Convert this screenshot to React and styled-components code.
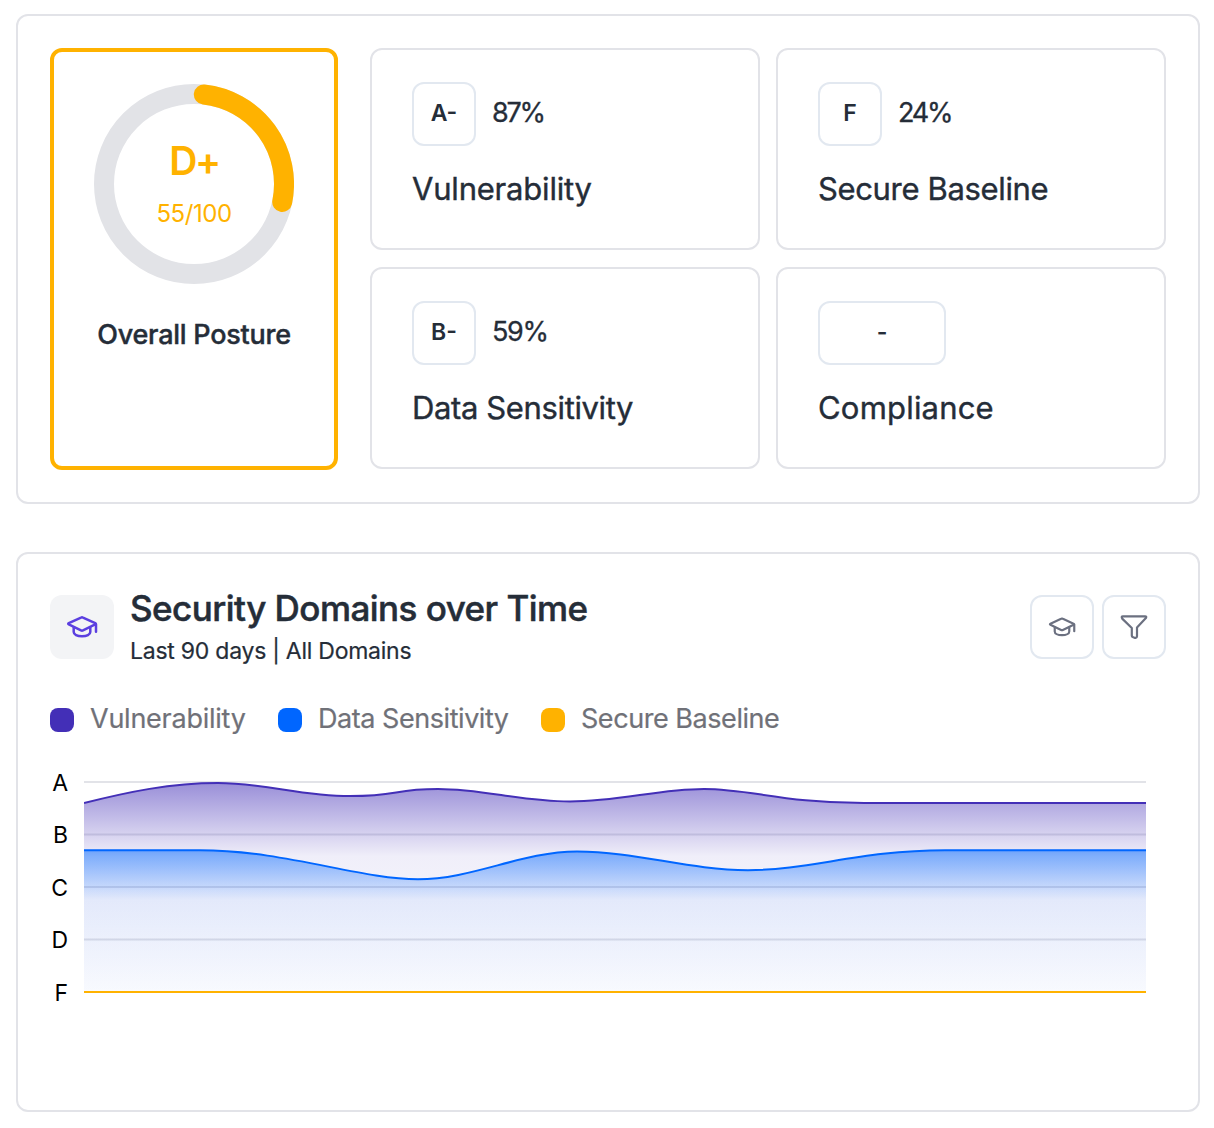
import styled, { createGlobalStyle } from "styled-components";

const GlobalStyle = createGlobalStyle`
  * {
    box-sizing: border-box;
  }

  body {
    margin: 0;
    background: #fff;
    color: #252d38;
    font-family: Inter, "Liberation Sans", sans-serif;
  }
`;

const Page = styled.main`
  display: flex;
  flex-direction: column;
  gap: 48px;
  padding: 14px 14px 16px 16px;
`;

const Panel = styled.section`
  height: ${(props) => props.$height}px;
  padding: 32px;
  border: 2px solid #e2e3e8;
  border-radius: 12px;
`;

const Summary = styled(Panel)`
  display: flex;
  gap: 32px;
`;

const Overall = styled.div`
  display: flex;
  flex-direction: column;
  align-items: center;
  flex: 0 0 288px;
  height: 422px;
  padding-top: 32px;
  border: 4px solid #ffb200;
  border-radius: 12px;
`;

const Ring = styled.div`
  display: grid;
  width: 200px;
  height: 200px;

  & > * {
    grid-area: 1 / 1;
  }
`;

const RingText = styled.div`
  display: flex;
  flex-direction: column;
  align-items: center;
  padding-top: 52px;
  color: #ffb200;
`;

const OverallGrade = styled.span`
  font-size: 39px;
  line-height: 50px;
  font-weight: 600;
  letter-spacing: -2.4px;
`;

const OverallScore = styled.span`
  margin-top: 13px;
  font-size: 24px;
  line-height: 30px;
  letter-spacing: -0.45px;
`;

const OverallLabel = styled.h3`
  margin: 31px 0 0;
  font-size: 27px;
  line-height: 40px;
  font-weight: 500;
  letter-spacing: -0.25px;
  -webkit-text-stroke: 0.4px;
`;

const Cards = styled.div`
  display: grid;
  flex: 1;
  grid-template-columns: repeat(2, 1fr);
  grid-template-rows: repeat(2, 202px);
  gap: 17px 16px;
`;

const Card = styled.article`
  padding: 32px 40px;
  border: 2px solid #e2e3e8;
  border-radius: 12px;
`;

const CardTop = styled.div`
  display: flex;
  align-items: center;
  gap: 16px;
`;

const Grade = styled.div`
  display: flex;
  align-items: center;
  justify-content: center;
  width: ${(props) => (props.$wide ? 128 : 64)}px;
  height: 64px;
  padding-bottom: 2px;
  border: 2px solid #e2e8f0;
  border-radius: 12px;
  font-size: 23px;
  font-weight: 600;
`;

const Percent = styled.span`
  padding-bottom: 3px;
  font-size: 27px;
  letter-spacing: ${(props) => props.$spacing}px;
  -webkit-text-stroke: 0.3px;
`;

const CardTitle = styled.h3`
  margin: 23px 0 0;
  font-size: 31px;
  line-height: 40px;
  font-weight: 400;
  letter-spacing: ${(props) => props.$spacing}px;
  -webkit-text-stroke: 0.4px;
`;

const Header = styled.header`
  display: flex;
  height: 88px;
  padding-top: 9px;
`;

const IconTile = styled.div`
  display: grid;
  place-items: center;
  width: 64px;
  height: 64px;
  background: #f3f4f6;
  border-radius: 12px;
  color: #5b3fe0;
`;

const Heading = styled.div`
  flex: 1;
  margin: -9px 0 0 16px;
`;

const Title = styled.h2`
  margin: 0;
  font-size: 35px;
  line-height: 44px;
  font-weight: 500;
  letter-spacing: -0.53px;
  -webkit-text-stroke: 0.5px;
`;

const Subtitle = styled.p`
  margin: 5px 0 0;
  font-size: 23px;
  line-height: 32px;
  letter-spacing: -0.25px;
  -webkit-text-stroke: 0.2px;
`;

const Actions = styled.div`
  display: flex;
  gap: 8px;
`;

const IconButton = styled.button`
  display: grid;
  place-items: center;
  width: 64px;
  height: 64px;
  padding: 0;
  border: 2px solid #e2e8f0;
  border-radius: 12px;
  background: #fff;
  color: #6b7080;
`;

const Legend = styled.ul`
  display: flex;
  margin: 24px 0 0;
  padding: 0;
  list-style: none;
`;

const LegendItem = styled.li`
  display: flex;
  align-items: center;
  width: ${(props) => props.$width}px;
  height: 44px;
  color: #707178;
  font-size: 27px;
  line-height: 40px;
  letter-spacing: ${(props) => props.$spacing}px;
  white-space: nowrap;
  -webkit-text-stroke: 0.2px;

  &::before {
    content: "";
    width: 24px;
    height: 24px;
    margin: 0 16px 0 0;
    border-radius: 8px;
    background: ${(props) => props.$color};
  }
`;

const LegendText = styled.span`
  padding-bottom: 3px;
`;

const Chart = styled.div`
  display: flex;
  gap: 16px;
  margin-top: 15px;
`;

const Axis = styled.div`
  display: flex;
  flex-direction: column;
  width: 18px;
  margin-top: -0.3px;
  color: #000;
  font-size: 23px;
  text-align: right;
`;

const Tick = styled.span`
  height: 52.5px;
  line-height: 52.5px;
`;

const Plot = styled.svg`
  display: block;
  margin-top: 24px;
`;

const domains = [
  { name: "Vulnerability", grade: "A-", score: "87%", spacing: -0.2, scoreSpacing: -2.2 },
  { name: "Secure Baseline", grade: "F", score: "24%", spacing: -0.35, scoreSpacing: -2.2 },
  { name: "Data Sensitivity", grade: "B-", score: "59%", spacing: -0.37, scoreSpacing: -1.3 },
  { name: "Compliance", grade: "-", spacing: 0.2 },
];

const series = [
  { name: "Vulnerability", color: "#432fb7", width: 228, spacing: -0.25 },
  { name: "Data Sensitivity", color: "#0066ff", width: 263, spacing: -0.45 },
  { name: "Secure Baseline", color: "#ffb200", width: 260, spacing: -0.45 },
];

const vulnerabilityLine =
  "M0 22C44 11 86 2 134 2S216 15 266 15S308 8 354 8S436 20.5 486 20.5S574 8 620 8C666 8 700 22 780 22H1062";
const sensitivityLine =
  "M0 69.3H116C201 69.3 276 98.3 334 98.3C389 98.3 438 70.5 493 70.5C553 70.5 604 89.2 664 89.2C726 89.2 776 69.3 861 69.3H1062";

function CapIcon({ size = 32 }) {
  return (
    <svg
      width={size}
      height={size}
      viewBox="0 0 32 32"
      fill="none"
      stroke="currentColor"
      strokeWidth="2.5"
      strokeLinecap="round"
      strokeLinejoin="round"
    >
      <path d="M2.8 12.2 15 6.6q1-.5 2 0l12.2 5.6q1.2.6 0 1.2L17 19.4q-1 .5-2 0L2.8 13.4q-1.2-.6 0-1.2Z" />
      <path d="M7.7 16.4V21c0 2.4 3.4 4.3 8.3 4.3s8.3-1.9 8.3-4.3v-4.6M30 13.2v7.6" />
    </svg>
  );
}

function FunnelIcon() {
  return (
    <svg
      width="32"
      height="32"
      viewBox="0 0 32 32"
      fill="none"
      stroke="currentColor"
      strokeWidth="2.2"
      strokeLinejoin="round"
    >
      <path d="M4.9 5.3h22.2q1.8 0 .8 1.8L19 16.4v8.9q0 1.4-1.2 1.5h-1q-3-.5-3-2.2V17L4.2 7.6q-1.2-2.3.7-2.3Z" />
    </svg>
  );
}

function ScoreRing() {
  return (
    <Ring>
      <svg width="200" height="200" fill="none" strokeWidth="20">
        <circle cx="100" cy="100" r="90" stroke="#e2e3e7" />
        <path
          d="M109.8 10.5A90 90 0 0 1 188.2 118"
          stroke="#ffb200"
          strokeLinecap="round"
        />
      </svg>
      <RingText>
        <OverallGrade>D+</OverallGrade>
        <OverallScore>55/100</OverallScore>
      </RingText>
    </Ring>
  );
}

function DomainCard({ domain }) {
  const { name, grade, score, spacing, scoreSpacing } = domain;

  return (
    <Card>
      <CardTop>
        <Grade $wide={!score}>{grade}</Grade>
        {score && <Percent $spacing={scoreSpacing}>{score}</Percent>}
      </CardTop>
      <CardTitle $spacing={spacing}>{name}</CardTitle>
    </Card>
  );
}

function DomainsChart() {
  return (
    <Chart>
      <Axis>
        {["A", "B", "C", "D", "F"].map((tick) => (
          <Tick key={tick}>{tick}</Tick>
        ))}
      </Axis>
      <Plot width="1062" height="220" fill="none" strokeWidth="2">
        <defs>
          <linearGradient id="purple" x1="0" y1="0" x2="0" y2="1">
            <stop offset="0" stopColor="#432fb7" stopOpacity="0.54" />
            <stop offset="0.35" stopColor="#432fb7" stopOpacity="0.08" />
            <stop offset="1" stopColor="#432fb7" stopOpacity="0.01" />
          </linearGradient>
          <linearGradient id="blue" x1="0" y1="0" x2="0" y2="1">
            <stop offset="0" stopColor="#0066ff" stopOpacity="0.52" />
            <stop offset="0.35" stopColor="#0066ff" stopOpacity="0.07" />
            <stop offset="1" stopColor="#0066ff" stopOpacity="0.02" />
          </linearGradient>
        </defs>
        {[1, 53.5, 106, 158.5].map((y) => (
          <path key={y} d={`M0 ${y}H1062`} stroke="#e2e3e8" />
        ))}
        <path d={`${vulnerabilityLine}V211H0Z`} fill="url(#purple)" />
        <path d={vulnerabilityLine} stroke="#432fb7" />
        <path d={`${sensitivityLine}V211H0Z`} fill="url(#blue)" />
        <path d={sensitivityLine} stroke="#0066ff" />
        <path d="M0 211H1062" stroke="#ffb200" />
      </Plot>
    </Chart>
  );
}

export default function App() {
  return (
    <>
      <GlobalStyle />
      <Page>
        <Summary $height={490}>
          <Overall>
            <ScoreRing />
            <OverallLabel>Overall Posture</OverallLabel>
          </Overall>
          <Cards>
            {domains.map((domain) => (
              <DomainCard key={domain.name} domain={domain} />
            ))}
          </Cards>
        </Summary>

        <Panel $height={560}>
          <Header>
            <IconTile>
              <CapIcon />
            </IconTile>
            <Heading>
              <Title>Security Domains over Time</Title>
              <Subtitle>Last 90 days | All Domains</Subtitle>
            </Heading>
            <Actions>
              <IconButton aria-label="Learn">
                <CapIcon size={28} />
              </IconButton>
              <IconButton aria-label="Filter">
                <FunnelIcon />
              </IconButton>
            </Actions>
          </Header>
          <Legend>
            {series.map(({ name, color, width, spacing }) => (
              <LegendItem key={name} $color={color} $width={width} $spacing={spacing}>
                <LegendText>{name}</LegendText>
              </LegendItem>
            ))}
          </Legend>
          <DomainsChart />
        </Panel>
      </Page>
    </>
  );
}
